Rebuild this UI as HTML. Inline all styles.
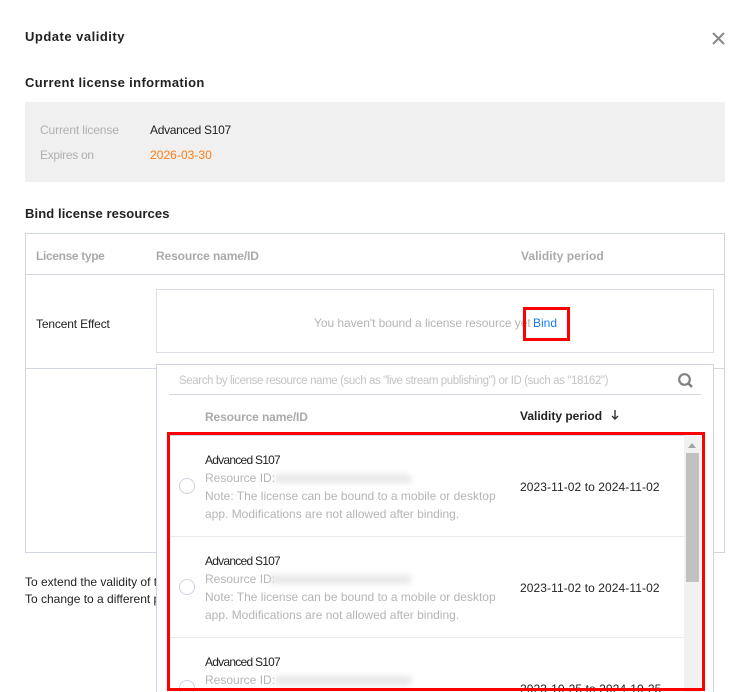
<!DOCTYPE html>
<html><head><meta charset="utf-8"><style>
html,body{margin:0;padding:0;background:#fff}
#p{position:relative;width:750px;height:692px;overflow:hidden;background:#fff;font:12px/18px "Liberation Sans",sans-serif;color:#333}
#p div{position:absolute}
.t{white-space:nowrap}
.b{font-weight:bold;color:#222}
.g{color:#b5b5b5}
.h{font-weight:bold;color:#aaa}
.k{color:#222}
.l{background:#cfd5e2}
.n{letter-spacing:-.75px}
.s{background:#e8eaef;left:170px;width:514px;height:1px}
.r{width:14px;height:14px;border:1px solid #ccd3df;border-radius:50%;left:179px;box-sizing:content-box;background:#fff}
.x{height:9px;background:#e2e2e2;filter:blur(3px);opacity:.8}
.d{left:520px;letter-spacing:.08px}
.red{border:3px solid #f00;box-sizing:border-box}
</style></head><body><div id="p">
<div class="t b" style="left:25px;top:28px;font-size:13px;letter-spacing:.5px">Update validity</div>
<svg style="position:absolute;left:712px;top:32px" width="13" height="13" viewBox="0 0 13 13"><path d="M1 1L12 12M12 1L1 12" stroke="#888" stroke-width="2" fill="none"/></svg>
<div class="t b" style="left:25px;top:74px;font-size:13px;letter-spacing:.37px">Current license information</div>
<div style="left:25px;top:102px;width:700px;height:80px;background:#f0f0f0"></div>
<div class="t" style="left:40px;top:121px;color:#b0b0b0;letter-spacing:-.13px">Current license</div>
<div class="t k" style="left:150px;top:121px;letter-spacing:-.3px">Advanced S107</div>
<div class="t" style="left:40px;top:146px;color:#b0b0b0;letter-spacing:-.3px">Expires on</div>
<div class="t" style="left:150px;top:146px;color:#ff7a14;letter-spacing:.05px">2026-03-30</div>
<div class="t b" style="left:25px;top:205px;font-size:13px;letter-spacing:.1px">Bind license resources</div>

<div style="left:25px;top:233px;width:700px;height:320px;border:1px solid #cfd5e2;box-sizing:border-box"></div>
<div class="l" style="left:25px;top:274px;width:700px;height:1px"></div>
<div class="l" style="left:25px;top:368px;width:700px;height:1px"></div>
<div class="t h" style="left:36px;top:247px;letter-spacing:-.35px">License type</div>
<div class="t h" style="left:156px;top:247px;letter-spacing:-.12px">Resource name/ID</div>
<div class="t h" style="left:521px;top:247px;letter-spacing:.05px">Validity period</div>
<div class="t k" style="left:36px;top:315px;letter-spacing:-.15px">Tencent Effect</div>
<div style="left:156px;top:289px;width:558px;height:64px;border:1px solid #dcdfe6;box-sizing:border-box"></div>
<div class="t g" style="left:314px;top:314px;letter-spacing:-.05px">You haven't bound a license resource yet</div>
<div class="t" style="left:533px;top:314px;color:#1a7af0">Bind</div>
<div class="red" style="left:523px;top:307px;width:47px;height:34px"></div>

<div class="t k" style="left:25px;top:573px">To extend the validity of the license</div>
<div class="t k" style="left:25px;top:590px">To change to a different package</div>

<div style="left:156px;top:364px;width:558px;height:340px;background:#fff;border:1px solid #cfd5e2;box-sizing:border-box"></div>
<div class="t" style="left:179px;top:372px;color:#c4c4c4;font-size:11.5px;letter-spacing:-.4px">Search by license resource name (such as "live stream publishing") or ID (such as "18162")</div>
<svg style="position:absolute;left:677px;top:372px" width="17" height="17" viewBox="0 0 17 17"><circle cx="7.5" cy="7.5" r="5.3" stroke="#808080" stroke-width="2.2" fill="none"/><path d="M11.5 11.5L15 15" stroke="#808080" stroke-width="2.4"/></svg>
<div class="l" style="left:169px;top:394px;width:532px;height:1px"></div>
<div class="t h" style="left:205px;top:408px;letter-spacing:-.12px">Resource name/ID</div>
<div class="t b" style="left:520px;top:407px">Validity period</div>
<svg style="position:absolute;left:610px;top:409px" width="10" height="12" viewBox="0 0 10 12"><path d="M5 1V10M2 7L5 10L8 7" stroke="#333" stroke-width="1.4" fill="none"/></svg>

<div class="l" style="left:170px;top:435px;width:514px;height:1px"></div>
<div style="left:684px;top:435px;width:17px;height:257px;background:#f1f1f1"></div>
<svg style="position:absolute;left:687px;top:441px" width="10" height="8" viewBox="0 0 10 8"><path d="M1 7L5 2L9 7Z" fill="#a3a3a3"/></svg>
<div style="left:686px;top:453px;width:13px;height:129px;background:#c1c1c1"></div>

<div class="t k n" style="left:205px;top:451px">Advanced S107</div>
<div class="t g" style="left:205px;top:469px">Resource ID:</div>
<div class="x" style="left:275px;top:474px;width:136px"></div>
<div class="t g" style="left:205px;top:487px">Note: The license can be bound to a mobile or desktop</div>
<div class="t g" style="left:205px;top:505px">app. Modifications are not allowed after binding.</div>
<div class="r" style="top:478px"></div>
<div class="t k d" style="top:478px">2023-11-02 to 2024-11-02</div>
<div class="s" style="top:536px"></div>

<div class="t k n" style="left:205px;top:552px">Advanced S107</div>
<div class="t g" style="left:205px;top:570px">Resource ID:</div>
<div class="x" style="left:270px;top:575px;width:141px"></div>
<div class="t g" style="left:205px;top:588px">Note: The license can be bound to a mobile or desktop</div>
<div class="t g" style="left:205px;top:606px">app. Modifications are not allowed after binding.</div>
<div class="r" style="top:579px"></div>
<div class="t k d" style="top:579px">2023-11-02 to 2024-11-02</div>
<div class="s" style="top:637px"></div>

<div class="t k n" style="left:205px;top:653px">Advanced S107</div>
<div class="t g" style="left:205px;top:671px">Resource ID:</div>
<div class="x" style="left:275px;top:676px;width:136px"></div>
<div class="r" style="top:680px"></div>
<div class="t k d" style="top:680px">2023-10-25 to 2024-10-25</div>

<div class="red" style="left:167px;top:432px;width:538px;height:259px"></div>
</div></body></html>
